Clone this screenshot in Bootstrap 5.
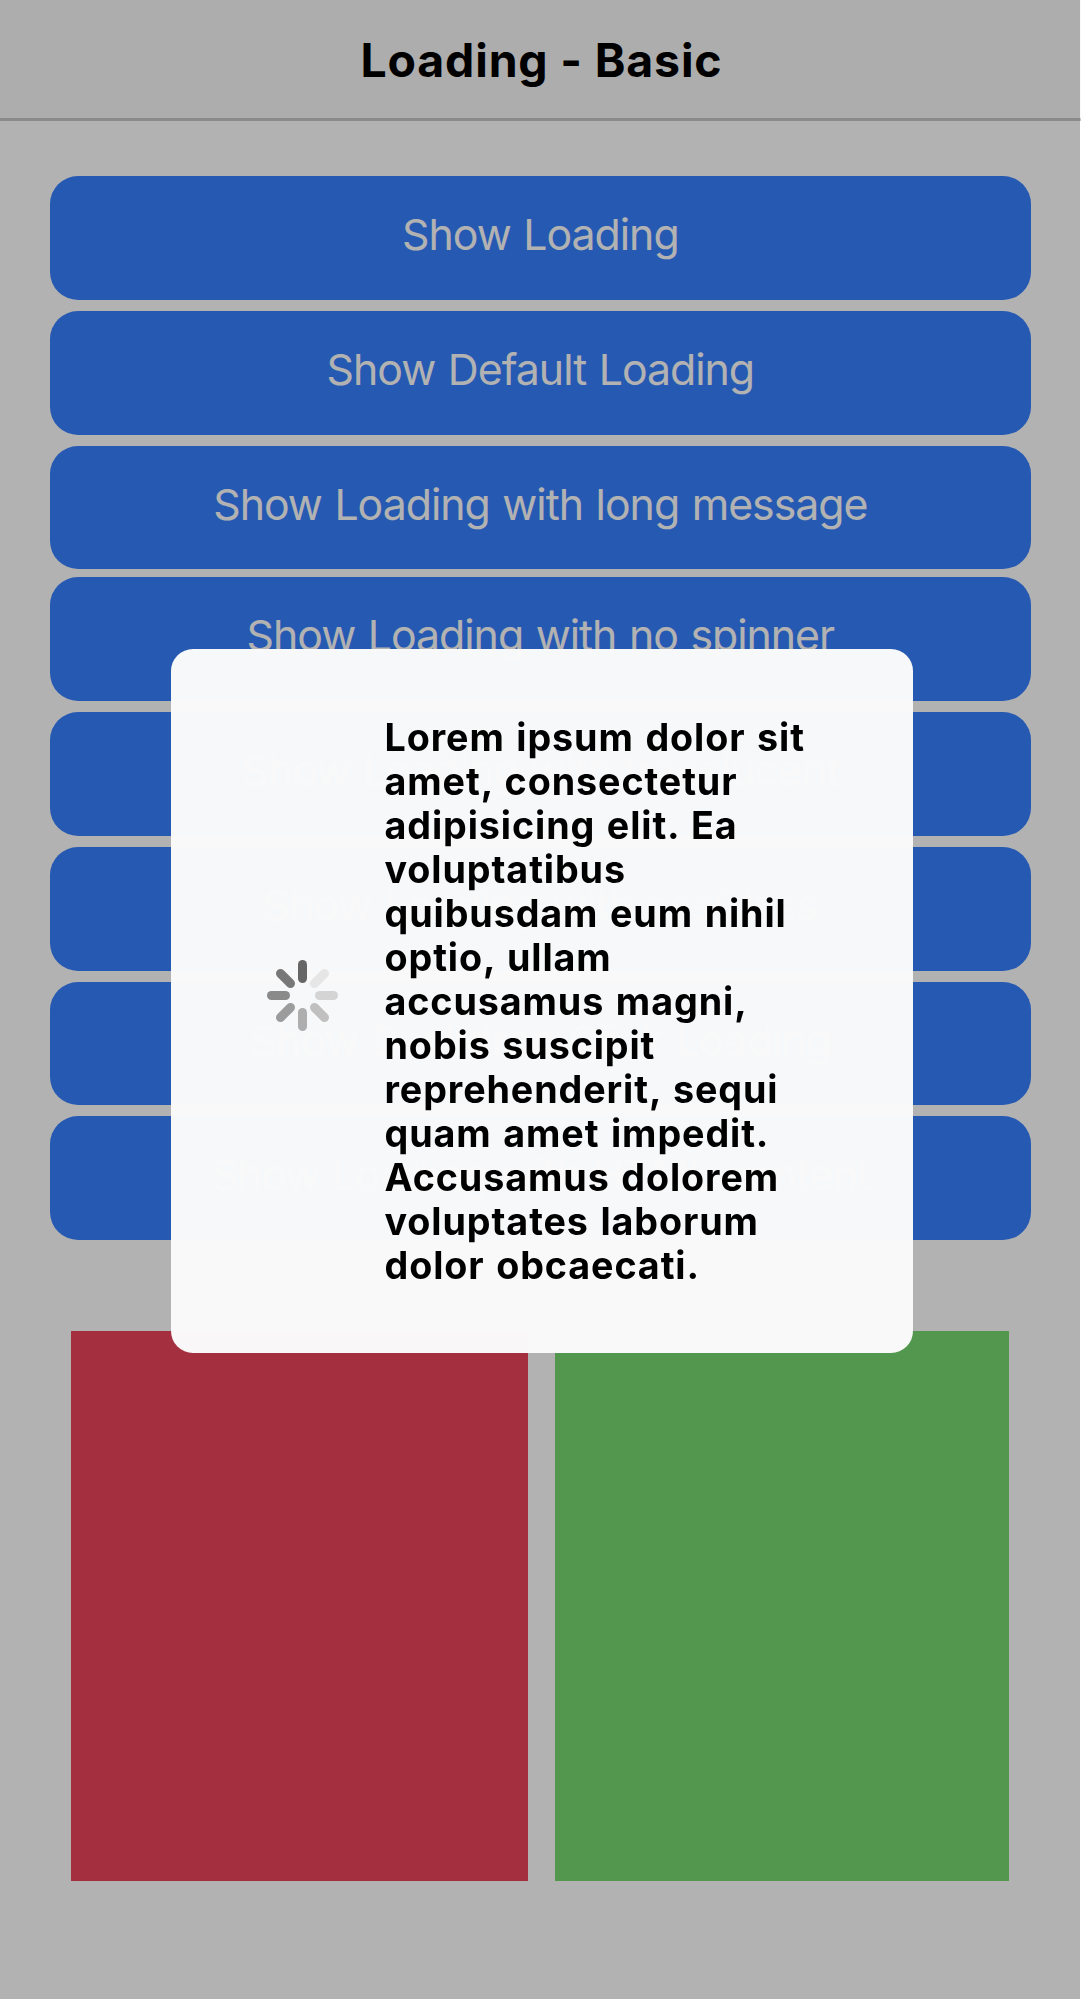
<!DOCTYPE html>
<html lang="en">
<head>
<meta charset="utf-8">
<meta name="viewport" content="width=device-width, initial-scale=1">
<title>Loading - Basic</title>
<link href="https://cdn.jsdelivr.net/npm/bootstrap@5.3.0/dist/css/bootstrap.min.css" rel="stylesheet">
<style>
  html, body { height: 1999px; overflow: hidden; }
  body { font-family: Inter, "Liberation Sans", sans-serif; background: #fff; }
  .app-header { height: 121px; background: #f8f8f8; border-bottom: 3px solid #c8c8c8; padding-top: 4px; }
  .app-title { font-size: 46.4px; font-weight: 700; letter-spacing: .85px; color: #000; padding-left: 2px; }
  .action-list { padding: 55px 49.8px 0 49.5px; gap: 11px; }
  .btn-action {
    --bs-btn-bg: #3780ff; --bs-btn-color: #fff; --bs-btn-border-width: 0;
    --bs-btn-border-radius: 28px; --bs-btn-padding-y: 0;
    height: 123.75px; font-size: 42.8px; letter-spacing: -1px; word-spacing: 1.5px; padding-bottom: 5.5px;
  }
  .btn-close-up { margin-top: -3px; }
  .swatches { padding: 91px 71.7px 0 71.4px; gap: 27px; }
  .swatch { height: 550px; }
  .swatch-red { background: #eb445a; flex: 0 0 456.6px; }
  .swatch-green { background: #77d76f; }
  .dim-layer { width: 1080px; background: rgba(0,0,0,.3); }
  .loading-box {
    width: 742px; height: 704px; margin-left: 3px; margin-top: 3px; border-radius: 22px;
    background: rgba(249,249,249,.993); padding-left: 95px; gap: 46px;
  }
  .loading-text { font-size: 37.7px; line-height: 44.05px; font-weight: 700; letter-spacing: .9px; word-spacing: 1.8px; color: #000; margin-top: 0; }
  .spin-icon { margin-top: -12px; }
</style>
</head>
<body>
<header class="app-header d-flex align-items-center justify-content-center">
  <h1 class="app-title mb-0">Loading - Basic</h1>
</header>
<main>
  <div class="action-list d-flex flex-column">
    <button class="btn btn-action" type="button">Show Loading</button>
    <button class="btn btn-action" type="button">Show Default Loading</button>
    <button class="btn btn-action" type="button">Show Loading with long message</button>
    <button class="btn btn-action btn-close-up" type="button">Show Loading with no spinner</button>
    <button class="btn btn-action" type="button">Show Loading with translucent</button>
    <button class="btn btn-action" type="button">Show Loading with cssClass</button>
    <button class="btn btn-action" type="button">Show Backdrop Click Loading</button>
    <button class="btn btn-action" type="button">Show Loading with HTML content</button>
  </div>
  <div class="swatches d-flex">
    <div class="swatch swatch-red"></div>
    <div class="swatch swatch-green flex-fill"></div>
  </div>
</main>
<div class="dim-layer position-fixed top-0 start-0 h-100 d-flex align-items-center justify-content-center">
  <div class="loading-box d-flex align-items-center" role="alert">
    <svg class="spin-icon flex-shrink-0" width="73" height="73" viewBox="-36.5 -36.5 73 73" stroke-width="9" stroke-linecap="round">
      <path d="M0-17V-31" stroke="#666"/>
      <path d="M12-12L22-22" stroke="#e6e6e6"/>
      <path d="M17 0H31" stroke="#d4d4d4"/>
      <path d="M12 12L22 22" stroke="#c0c0c0"/>
      <path d="M0 17V31" stroke="#aeaeae"/>
      <path d="M-12 12L-22 22" stroke="#9c9c9c"/>
      <path d="M-17 0H-31" stroke="#8a8a8a"/>
      <path d="M-12-12L-22-22" stroke="#787878"/>
    </svg>
    <div class="loading-text text-nowrap">Lorem ipsum dolor sit<br>amet, consectetur<br>adipisicing elit. Ea<br>voluptatibus<br>quibusdam eum nihil<br>optio, ullam<br>accusamus magni,<br>nobis suscipit<br>reprehenderit, sequi<br>quam amet impedit.<br>Accusamus dolorem<br>voluptates laborum<br>dolor obcaecati.</div>
  </div>
</div>
<script src="https://cdn.jsdelivr.net/npm/bootstrap@5.3.0/dist/js/bootstrap.bundle.min.js"></script>
</body>
</html>
